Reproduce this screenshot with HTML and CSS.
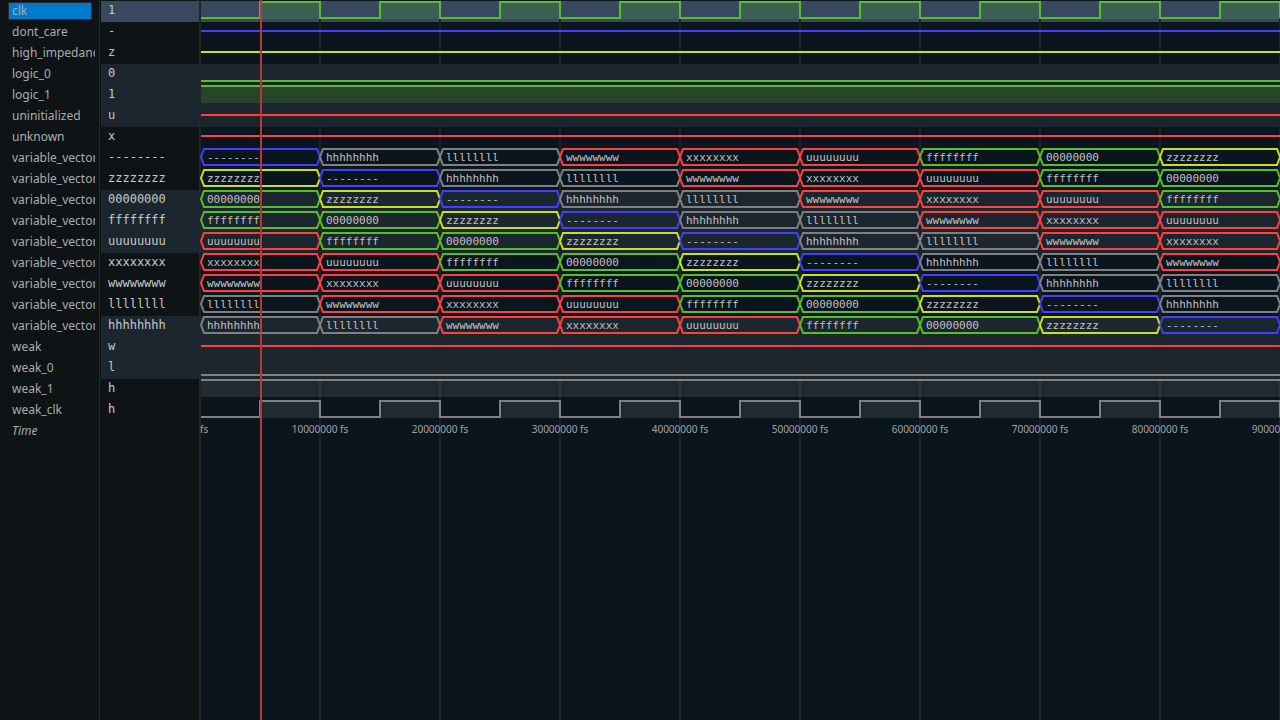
FILE: index.html
```html
<!DOCTYPE html>
<html lang="en">
<head>
    <meta charset="UTF-8">
    <meta name="viewport" content="width=device-width, initial-scale=1.0">
    <title>Waveform Viewer</title>
    <link rel="stylesheet" href="styles.css">
</head>
<body>
    <div class="viewer">
        <div class="names" id="names"></div>
        <div class="values" id="values"></div>
        <div class="waves" id="waves">
            <div class="cursor"></div>
        </div>
    </div>
    <script src="waves.js"></script>
</body>
</html>
```

FILE: styles.css
```css
body {
    margin: 0;
    font-family: "Noto Sans", "Open Sans", sans-serif;
    background-color: #0e1316;
    color: #acacac;
}
.viewer {
    display: flex;
    min-height: 100vh;
}
.names, .values {
    box-sizing: border-box;
    flex: none;
    width: 100px;
    border-right: 1px solid #282828;
}
.names {
    padding-top: 2px;
    padding-left: 8px;
    padding-right: 4px;
}
.values {
    padding-top: 1px;
    padding-left: 1px;
}
.name {
    display: block;
    box-sizing: border-box;
    width: 100%;
    height: 18px;
    margin: 0 0 3px;
    padding: 0 0 0 3px;
    border: 1px solid transparent;
    border-right: 0;
    background: none;
    color: inherit;
    font-family: inherit;
    font-size: 12px;
    line-height: 16px;
    text-align: left;
    white-space: nowrap;
    overflow: hidden;
}
.name.selected {
    width: 84px;
    border: 1px solid #24282b;
    background-color: #007acc;
}
.name.time {
    line-height: 14px;
    font-style: italic;
}
.value {
    height: 21px;
    padding-left: 7px;
    font-family: "DejaVu Sans Mono", monospace;
    font-size: 12px;
    line-height: 18px;
    color: #c8c8c8;
}
.waves {
    position: relative;
    flex: 1;
    min-width: 0;
    padding-top: 1px;
    overflow: hidden;
    background-color: #0a151d;
}
.waves, .wave {
    background-image: repeating-linear-gradient(90deg, #232323 0 1px, transparent 1px 119px, #232323 119px 120px);
}
.wave {
    height: 21px;
}
.wave svg {
    display: block;
    width: 100%;
    height: 21px;
}
.band {
    background-color: #1c262e;
}
.band.selected {
    background-color: #38485f;
}
.line {
    fill: none;
    stroke-width: 2;
}
.area {
    stroke: none;
    fill-opacity: 0.2;
}
.bus-text {
    font-family: "DejaVu Sans Mono", monospace;
    font-size: 11px;
    fill: #c0c0c0;
}
.axis {
    display: flex;
    margin-left: -60px;
}
.tick {
    flex: none;
    width: 120px;
    font-size: 10px;
    line-height: 16px;
    text-align: center;
    color: #a0a4a6;
}
.cursor {
    position: absolute;
    top: 0;
    bottom: 0;
    left: 60px;
    width: 2px;
    background-color: #b63935;
}
```

FILE: waves.js
```js
const STEP = 120;
const STEPS = Math.ceil((window.innerWidth - 200) / STEP);
const HIGH = 1;
const MID = 9;
const LOW = 17;

const GREEN = '#54bf26';
const RED = '#ff4040';
const YELLOW = '#c8e022';
const BLUE = '#4040ff';
const GRAY = '#808080';

const stateColors = { '-': BLUE, h: GRAY, l: GRAY, w: RED, x: RED, u: RED, f: GREEN, 0: GREEN, z: YELLOW };
const sequence = ['-', 'h', 'l', 'w', 'x', 'u', 'f', '0', 'z'];

const signals = [
    { name: 'clk', value: '1', type: 'clock', color: GREEN, selected: true },
    { name: 'dont_care', value: '-', type: 'mid', color: BLUE },
    { name: 'high_impedance', value: 'z', type: 'mid', color: YELLOW },
    { name: 'logic_0', value: '0', type: 'low', color: GREEN },
    { name: 'logic_1', value: '1', type: 'high', color: GREEN },
    { name: 'uninitialized', value: 'u', type: 'mid', color: RED },
    { name: 'unknown', value: 'x', type: 'mid', color: RED }
];
for (let i = 0; i < 9; i++) {
    const first = sequence[(9 - i) % 9];
    signals.push({ name: 'variable_vector', value: first.repeat(8), type: 'bus', shift: i });
}
signals.push(
    { name: 'weak', value: 'w', type: 'mid', color: RED },
    { name: 'weak_0', value: 'l', type: 'low', color: GRAY },
    { name: 'weak_1', value: 'h', type: 'high', color: GRAY },
    { name: 'weak_clk', value: 'h', type: 'clock', color: GRAY }
);

function flat(y, color) {
    return `<path class="line" stroke="${color}" d="M1 ${y}H${STEP * STEPS}"/>`;
}

function area(x, width, color) {
    return `<rect class="area" fill="${color}" x="${x}" y="${HIGH - 1}" width="${width}" height="18"/>`;
}

function clock(color) {
    let fills = '';
    let d = `M1 ${LOW}`;
    for (let i = 0; i < STEPS; i++) {
        const rise = i * STEP + STEP / 2;
        fills += area(rise, STEP / 2, color);
        d += `H${rise}V${HIGH}H${rise + STEP / 2}V${LOW}`;
    }
    return fills + `<path class="line" stroke="${color}" d="${d}"/>`;
}

function bus(shift) {
    let out = '';
    for (let i = 0; i < STEPS; i++) {
        const state = sequence[(i + 9 - shift) % 9];
        const a = i === 0 ? 1 : i * STEP;
        const b = (i + 1) * STEP;
        out += `<path class="line" stroke="${stateColors[state]}" d="M${a} ${MID}L${a + 3} ${HIGH}H${b - 3}L${b} ${MID}L${b - 3} ${LOW}H${a + 3}Z"/>`;
        out += `<text class="bus-text" x="${a + 6}" y="13">${state.repeat(8)}</text>`;
    }
    return out;
}

function draw(signal) {
    switch (signal.type) {
        case 'clock': return clock(signal.color);
        case 'low': return flat(LOW, signal.color);
        case 'high': return area(1, STEP * STEPS, signal.color) + flat(HIGH, signal.color);
        case 'bus': return bus(signal.shift);
        default: return flat(MID, signal.color);
    }
}

let names = '';
let values = '';
let waves = '';
signals.forEach((signal, i) => {
    const selected = signal.selected ? ' selected' : '';
    // groups of three rows alternate in shade
    const band = signal.selected || Math.floor(i / 3) % 2 === 1 ? ' band' : '';
    names += `<button type="button" class="name${selected}">${signal.name}</button>`;
    values += `<div class="value${band}${selected}">${signal.value}</div>`;
    waves += `<div class="wave${band}${selected}"><svg>${draw(signal)}</svg></div>`;
});
names += '<button type="button" class="name time">Time</button>';

let ticks = '';
for (let i = 0; i <= STEPS; i++) {
    ticks += `<span class="tick">${i * 10000000} fs</span>`;
}
waves += `<div class="axis">${ticks}</div>`;

document.getElementById('names').innerHTML = names;
document.getElementById('values').innerHTML = values;
document.getElementById('waves').insertAdjacentHTML('afterbegin', waves);
```
